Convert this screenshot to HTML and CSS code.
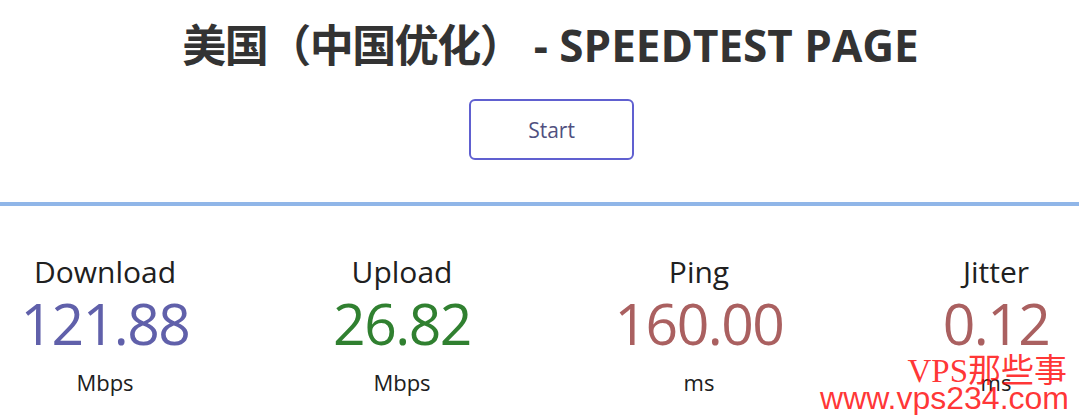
FILE: index.html
```html
<html>
  <head>
    <meta charset="utf-8">
    <link rel="stylesheet" href="styles.css">
    <title>SpeedTest</title>
  </head>
  <body>
    <h1><span class="cn">美国（中国优化）</span> - SPEEDTEST PAGE</h1>

    <div class="controls">
      <div class="startBtn">Start</div>
    </div>

    <div class="rule"></div>

    <div class="stats">
      <div class="stat">
        <div class="label">Download</div>
        <div class="meter dl">121.88</div>
        <div class="unit">Mbps</div>
      </div>
      <div class="stat">
        <div class="label">Upload</div>
        <div class="meter ul">26.82</div>
        <div class="unit">Mbps</div>
      </div>
      <div class="stat">
        <div class="label">Ping</div>
        <div class="meter ping">160.00</div>
        <div class="unit">ms</div>
      </div>
      <div class="stat">
        <div class="label">Jitter</div>
        <div class="meter ping">0.12</div>
        <div class="unit">ms</div>
      </div>
    </div>

    <div class="watermark">
      <div class="wmCn">VPS那些事</div>
      <div class="wmUrl">www.vps234.com</div>
    </div>
  </body>
</html>
```

FILE: styles.css
```css
body {
  margin: 0;
  background: #ffffff;
  color: #202020;
  font-family: 'Open Sans', 'Noto Sans CJK SC', sans-serif;
  width: 1079px;
  height: 415px;
  overflow: hidden;
  position: relative;
}

h1 {
  margin: 0;
  padding-top: 16px;
  padding-left: 22px;
  text-align: center;
  font-family: 'Open Sans', 'Noto Sans CJK SC', sans-serif;
  font-weight: bold;
  font-size: 44px;
  line-height: 58px;
  color: #333333;
}

h1 .cn {
  letter-spacing: -1.5px;
}

.controls {
  display: flex;
  justify-content: center;
  padding-top: 25px;
  padding-left: 24px;
}

.startBtn {
  width: 161px;
  height: 57px;
  border: 2px solid #6060d0;
  border-radius: 6px;
  display: flex;
  align-items: center;
  justify-content: center;
  font-size: 21px;
  color: #505080;
}

.rule {
  margin-top: 42px;
  height: 4px;
  background: #90b6e8;
}

.stats {
  display: grid;
  grid-template-columns: repeat(4, 200px);
  column-gap: 97px;
  padding-left: 5px;
  padding-top: 46px;
}

.stat {
  text-align: center;
}

.label {
  font-size: 30px;
  line-height: 40px;
  color: #202020;
}

.meter {
  font-size: 57px;
  line-height: 62px;
  letter-spacing: -1.5px;
}

.dl { color: #6060aa; }
.ul { color: #308030; }
.ping { color: #aa6060; }

.unit {
  font-size: 22px;
  line-height: 30px;
  padding-top: 13px;
  color: #202020;
}

.watermark {
  position: absolute;
  right: 10px;
  bottom: 3px;
  text-align: right;
  color: rgba(255, 0, 0, 0.8);
}

.wmCn {
  font-family: 'Liberation Serif', 'Noto Sans CJK SC', serif;
  font-size: 33px;
  line-height: 26px;
  margin-right: 2px;
}

.wmUrl {
  font-family: 'Liberation Sans', sans-serif;
  font-size: 32px;
  line-height: 28px;
}
```
